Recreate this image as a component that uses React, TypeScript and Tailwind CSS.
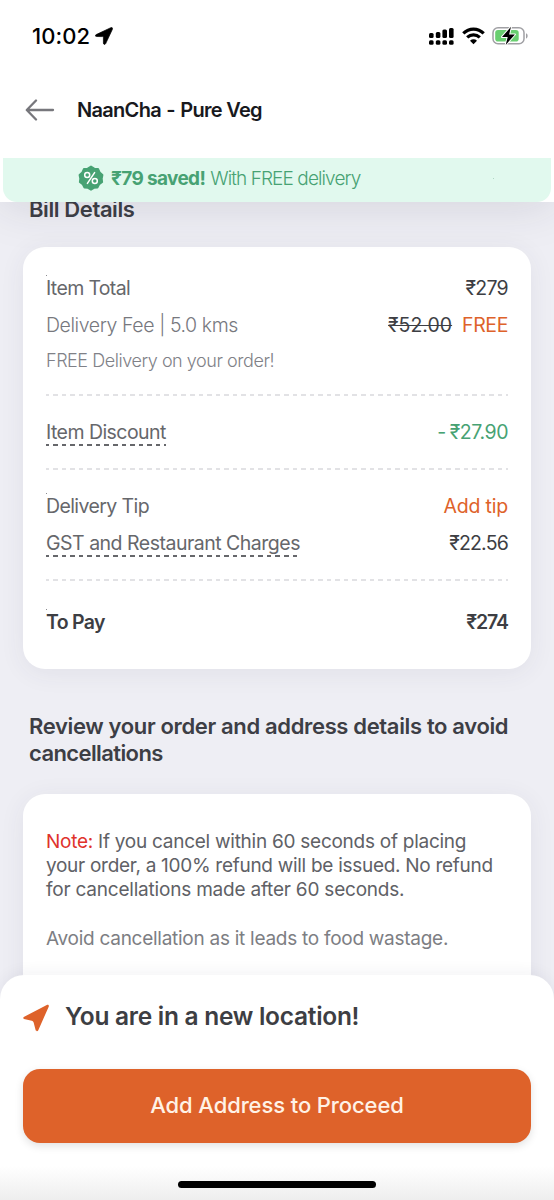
import type { ReactNode } from "react";

const DASH_LIGHT =
  "h-[2px] bg-[repeating-linear-gradient(90deg,#e2e2e5_0_3.2px,transparent_3.2px_7.2px,#e2e2e5_7.2px_8.55px)]";
const DASH_DARK =
  "absolute left-0 right-0 bottom-[5px] h-[2px] bg-[repeating-linear-gradient(90deg,#66676b_0_3.2px,transparent_3.2px_7.2px,#66676b_7.2px_8.55px)]";

type RowProps = {
  label: string;
  labelClass: string;
  className?: string;
  underlined?: boolean;
  speck?: boolean;
  children?: ReactNode;
};

function Row({ label, labelClass, className = "", underlined, speck, children }: RowProps) {
  return (
    <div className={`relative flex h-[37px] items-center justify-between ${className}`}>
      {speck && <i className="absolute left-0 top-[5px] size-px bg-[#8b8b90]" />}
      <div className="relative flex h-full items-center">
        <span className={labelClass}>{label}</span>
        {underlined && <i className={DASH_DARK} />}
      </div>
      {children}
    </div>
  );
}

function StatusBar() {
  return (
    <div className="flex h-[72px] items-center pl-8 pr-[25px]">
      <span className="text-[22px] font-medium tracking-[0.05px] text-black">10:02</span>
      <svg className="ml-[5px]" width="18" height="18" viewBox="0 0 18 18">
        <path
          d="M1.200 7.600 15.800.7c1.200-.6 2.200.4 1.600 1.600L10.700 16.600c-.7 1.400-2.300 1-2.300-.5V10.400c0-.6-.2-.8-.8-.8L1.700 9.500c-1.500 0-1.800-1.300-.5-1.900z"
          fill="#000"
          stroke="#000"
          strokeWidth=".7"
        />
      </svg>
      <div className="ml-auto flex items-center">
        <svg width="26" height="19" viewBox="0 0 26 19">
          <g fill="#000">
            <rect x="0" y="6" width="4.600" height="5" rx="1.500" />
            <rect x="6.800" y="5" width="4.600" height="6" rx="1.500" />
            <rect x="13.400" y="2.500" width="4.600" height="8.500" rx="1.500" />
            <rect x="20" y="1" width="4.600" height="10" rx="1.500" />
            <rect x="0" y="13.200" width="4.600" height="4.500" rx="1.500" />
            <rect x="6.800" y="13.200" width="4.600" height="4.500" rx="1.500" />
            <rect x="13.400" y="13.200" width="4.600" height="4.500" rx="1.500" />
            <rect x="20" y="13.200" width="4.600" height="4.500" rx="1.500" />
          </g>
        </svg>
        <svg className="ml-[7px]" width="23" height="18" viewBox="0 0 23 18">
          <g fill="none" stroke="#000" strokeWidth="3.200">
            <path d="M1.300 6.300C7.100.6 15.900.6 21.700 6.300" />
            <path d="M5.200 10.400c3.600-3.500 9-3.500 12.600 0" />
          </g>
          <path d="M8 13.700c2-1.800 5-1.800 7 0L11.500 17.200z" fill="#000" />
        </svg>
        <svg className="ml-[7px]" width="37" height="20" viewBox="0 0 37 20">
          <rect x="1" y="1.800" width="31" height="16" rx="5" fill="none" stroke="#a0a0a4" strokeWidth="1.500" />
          <path d="M34 7.200c2.200.8 2.200 4.500 0 5.300z" fill="#a0a0a4" />
          <rect x="3.200" y="4" width="23.500" height="11.600" rx="2.800" fill="#69cf70" />
          <path
            d="M19 .8 10 10.900h5.700L13.700 18.900 22.900 8.400h-5.800z"
            fill="#000"
            stroke="#fff"
            strokeWidth="2"
            paintOrder="stroke"
            strokeLinejoin="round"
          />
        </svg>
      </div>
    </div>
  );
}

function OfferBadge() {
  return (
    <svg width="26" height="26" viewBox="0 0 26 26">
      <path
        d="M13 1.500 16.300 3.600 20.100 3.900 21.700 7.400 24.500 10 23.800 13.500 24.200 17 21.200 19.400 19.500 22.600 15.900 22.900 13 24.800 10 22.900 6.400 22.600 4.700 19.400 1.800 17 2.200 13.500 1.500 10 4.300 7.400 5.900 3.900 9.700 3.600z"
        fill="#47a273"
        stroke="#47a273"
        strokeWidth="1.800"
        strokeLinejoin="round"
      />
      <g fill="none" stroke="#fff" strokeWidth="1.500" strokeLinecap="round">
        <circle cx="9.200" cy="10.100" r="2.500" />
        <circle cx="16.800" cy="16" r="2.500" />
        <path d="M16.600 7.600 9.400 18.400" />
      </g>
    </svg>
  );
}

export default function App() {
  return (
    <div className="flex h-[1200px] w-[554px] flex-col overflow-hidden bg-[#eeeef4] font-['Inter','Noto_Sans',sans-serif] leading-none whitespace-nowrap">
      <header className="relative z-10 h-[202px] shrink-0 bg-white shadow-[0_4px_44px_rgba(40,40,60,0.13)]">
        <StatusBar />
        <div className="flex h-[76px] items-center pl-[25px]">
          <svg width="30" height="22" viewBox="0 0 30 22" fill="none" stroke="#77777c" strokeWidth="2.300" strokeLinecap="round" strokeLinejoin="round">
            <path d="M28 11H2M11 1.500 1.800 11 11 20.500" />
          </svg>
          <h1 className="ml-[22px] text-[20px] font-semibold tracking-[-0.7px] text-[#18191d]">
            NaanCha <span className="mx-px">-</span> Pure Veg
          </h1>
        </div>
        <div className="mx-[3px] mt-[10px] flex h-[44px] items-center rounded-b-[14px] bg-[#e1f9ee] pb-[4px] pl-[75px] text-[#47a273]">
          <OfferBadge />
          <span className="ml-[7px] text-[19px] font-bold tracking-[-0.65px]">₹79 saved!</span>
          <span className="ml-[5px] text-[19px] font-light tracking-[-0.9px]">With FREE delivery</span>
          <i className="ml-[133px] size-px bg-[#b0d6c4]" />
        </div>
      </header>

      <main className="min-h-0 flex-1 overflow-hidden px-[23px]">
        <h2 className="-mt-1 pl-[6px] text-[22px] leading-[22px] font-semibold tracking-[-0.4px] text-[#3d3e45]">
          Bill Details
        </h2>

        <section className="mt-[27px] h-[422px] rounded-[22px] bg-white px-[23px] pt-[23px] text-[19.500px] text-[#3d3e43] shadow-[0_4px_26px_rgba(60,60,90,0.07)]">
          <Row label="Item Total" labelClass="tracking-[-0.65px] text-[#66676b]" speck>
            <span className="tracking-[-0.7px]">₹279</span>
          </Row>
          <Row label="Delivery Fee | 5.0 kms" labelClass="font-light tracking-[-0.420px] text-[#77787e]">
            <span className="flex gap-[10px]">
              <s className="tracking-[0px]">₹52.00</s>
              <span className="tracking-[-0.4px] text-[#de622a]">FREE</span>
            </span>
          </Row>
          <Row
            label="FREE Delivery on your order!"
            labelClass="text-[18px] font-light tracking-[-0.450px] text-[#808187]"
            className="-mt-[2px]"
          />
          <div className={`mt-[15px] ${DASH_LIGHT}`} />
          <Row label="Item Discount" labelClass="tracking-[-0.550px] text-[#66676b]" className="mt-[18px]" underlined>
            <span className="tracking-[-0.450px] text-[#47a273]">
              -<span className="ml-[4px]">₹27.90</span>
            </span>
          </Row>
          <div className={`mt-[17px] ${DASH_LIGHT}`} />
          <Row label="Delivery Tip" labelClass="tracking-[-0.6px] text-[#66676b]" className="mt-[18px]" speck>
            <span className="tracking-[-0.2px] text-[#de622a]">Add tip</span>
          </Row>
          <Row label="GST and Restaurant Charges" labelClass="tracking-[-0.5px] text-[#66676b]" underlined>
            <span className="tracking-[-0.8px]">₹22.56</span>
          </Row>
          <div className={`mt-[17px] ${DASH_LIGHT}`} />
          <Row label="To Pay" labelClass="font-semibold tracking-[-0.7px]" className="mt-[23px]" speck>
            <span className="font-semibold tracking-[-1.1px]">₹274</span>
          </Row>
        </section>

        <h2 className="mt-[44px] pl-[6px] text-[22px] leading-[27px] font-semibold text-[#3d3e45]">
          <span className="tracking-[-0.350px]">Review your order and address details to avoid</span>
          <br />
          <span className="tracking-[-0.6px]">cancellations</span>
        </h2>

        <section className="mt-[27px] h-[260px] rounded-[22px] bg-white px-[23px] pt-[36px] text-[19px] leading-6 text-[#606166] shadow-[0_4px_26px_rgba(60,60,90,0.07)]">
          <p className="tracking-[-0.260px]">
            <span className="text-[#e0322b]">Note:</span> If you cancel within 60 seconds of placing
          </p>
          <p className="tracking-[-0.290px]">your order, a 100% refund will be issued. No refund</p>
          <p className="tracking-[-0.210px]">for cancellations made after 60 seconds.</p>
          <p className="mt-[25px] tracking-[-0.270px] text-[#7d7e83]">Avoid cancellation as it leads to food wastage.</p>
        </section>
      </main>

      <footer className="relative z-10 -mt-6 h-[225px] shrink-0 rounded-t-[24px] bg-white bg-[linear-gradient(to_bottom,transparent_85%,#eeeeee)] px-[23px] shadow-[0_-2px_16px_rgba(40,40,60,0.06)]">
        <div className="flex h-[84px] items-center">
          <svg className="mt-[2px]" width="27" height="28" viewBox="0 0 27 28">
            <path
              d="M1.200 12.700 23.800.9c1.300-.7 2.500.4 1.900 1.800L15.300 26.200c-.7 1.500-2.300 1.200-2.700-.2l-1.900-7.200c-.3-1-.9-1.700-1.900-2L1 14.900c-1.100-.4-.9-1.600.2-2.200z"
              fill="#de622a"
            />
          </svg>
          <h3 className="-mt-px ml-[15px] text-[24.500px] font-semibold tracking-[-0.280px] text-[#3d3e43]">
            You are in a new location!
          </h3>
        </div>
        <button
          type="button"
          className="mt-[10px] h-[74px] w-full rounded-[17px] bg-[#de622a] pb-[2px] text-[22px] font-medium tracking-[-0.1px] text-[#fff2e6] shadow-[0_3px_8px_rgba(0,0,0,0.12)]"
        >
          Add Address to Proceed
        </button>
        <div className="mx-auto mt-[38px] h-[7px] w-[198px] rounded-full bg-black" />
      </footer>
    </div>
  );
}
